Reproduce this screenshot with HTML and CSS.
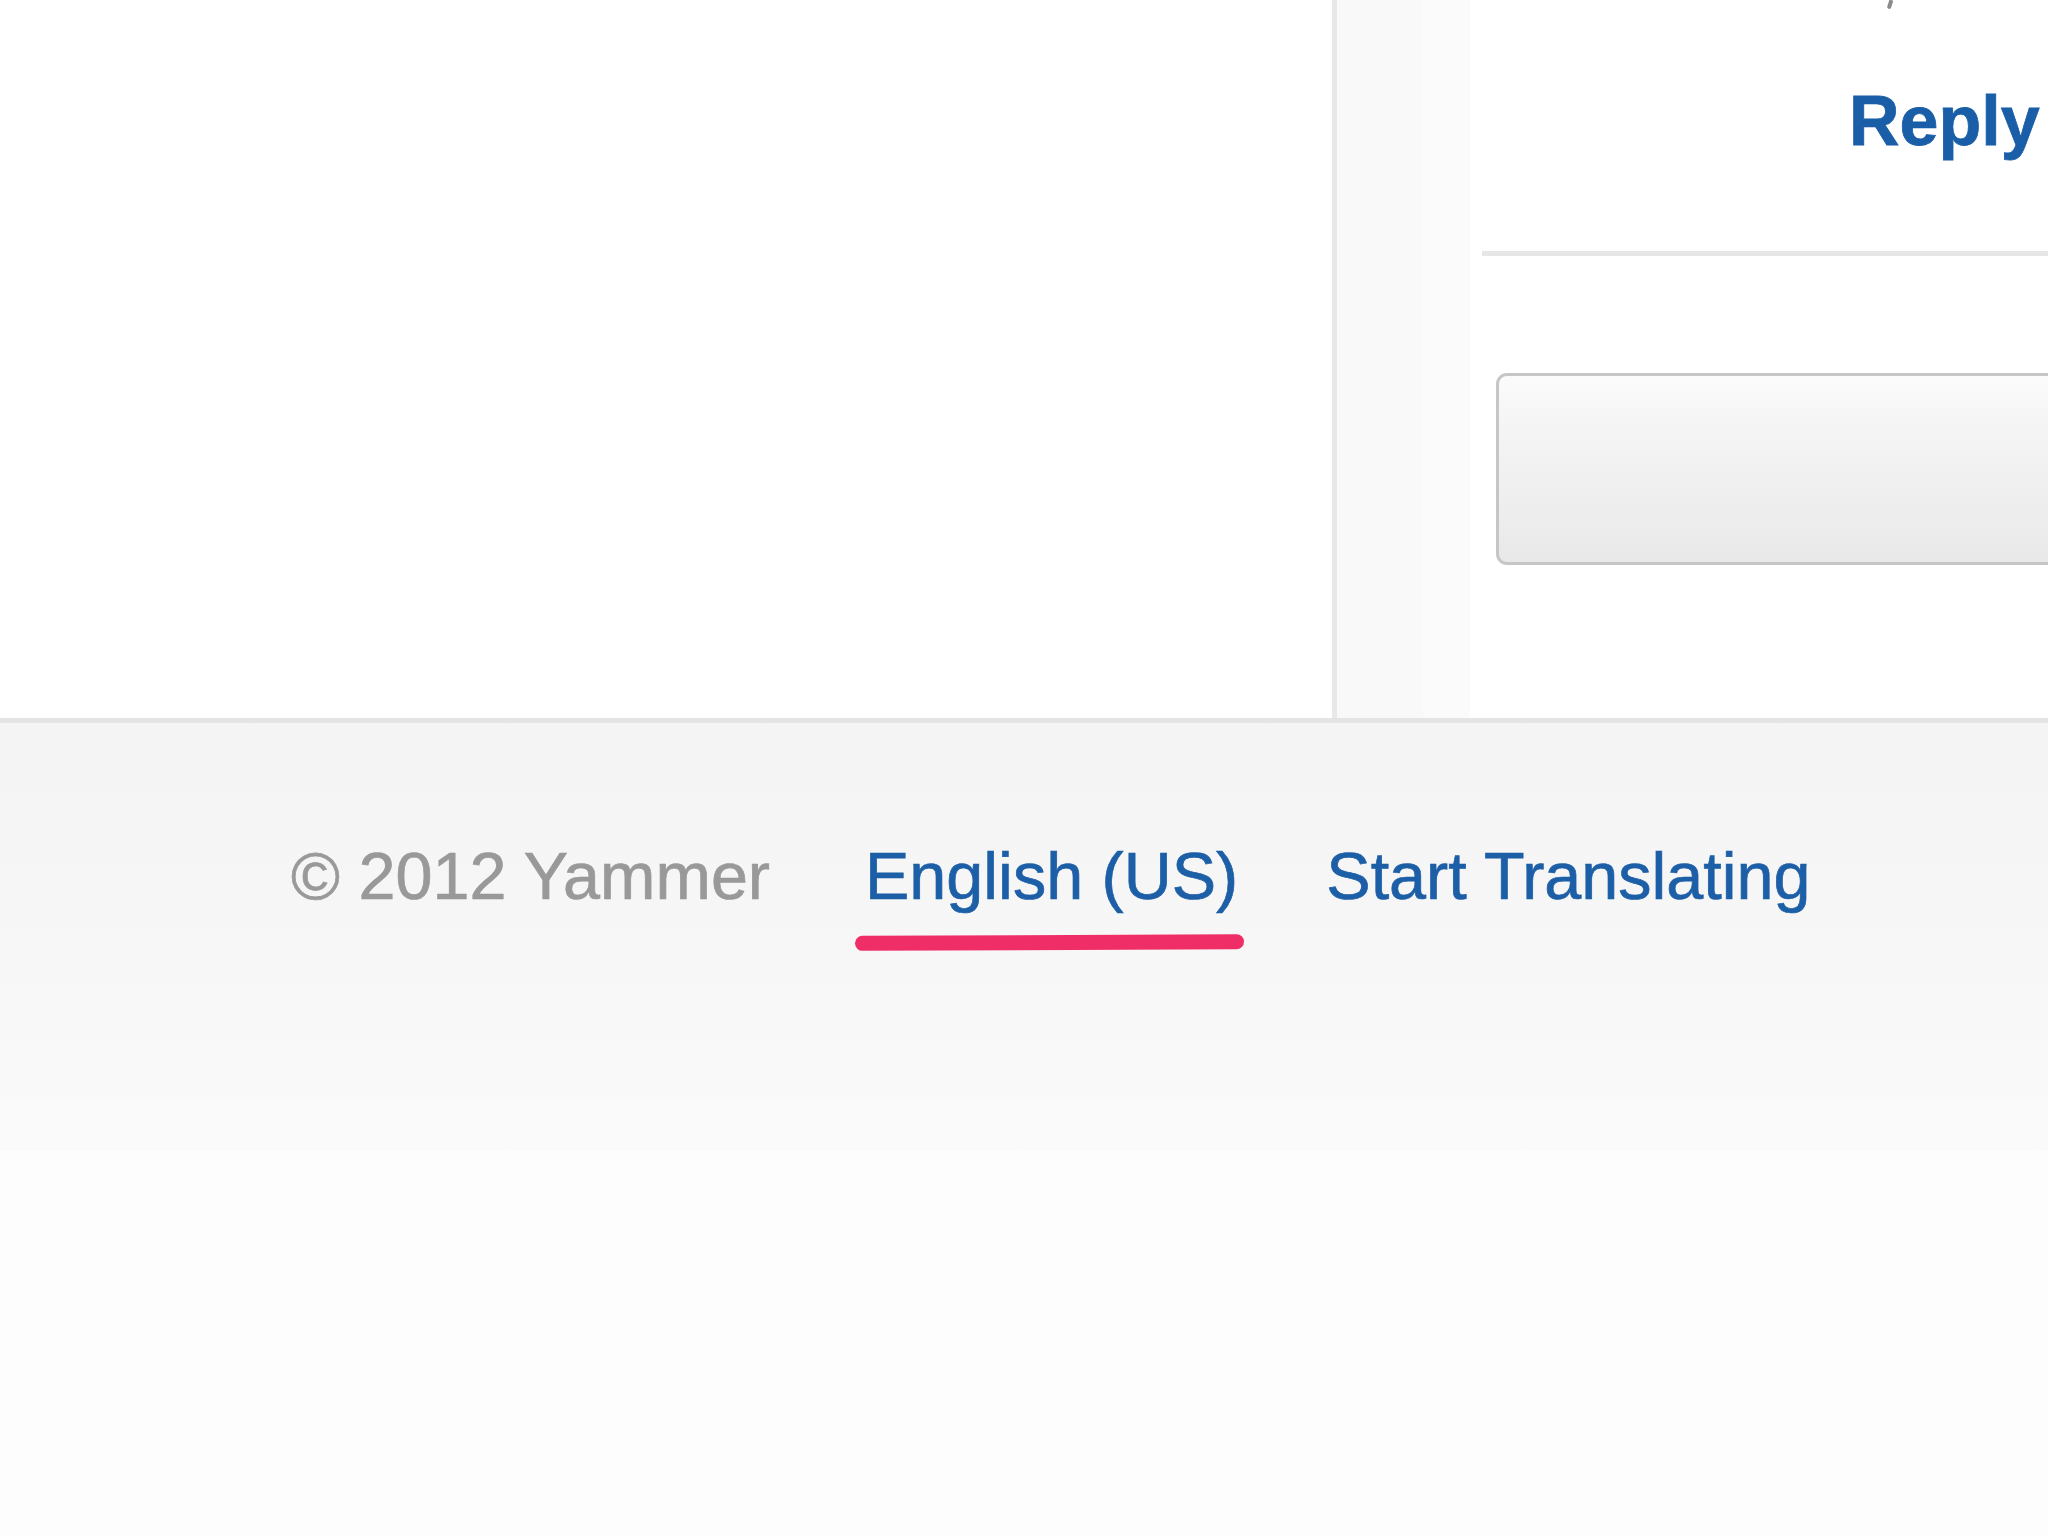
FILE: index.html
```html
<!DOCTYPE html>
<html lang="en">
<head>
<meta charset="utf-8">
<title>Yammer</title>
<link rel="stylesheet" href="styles.css">
</head>
<body>
  <div class="main">
    <div class="left-col"></div>
    <div class="divider"></div>
    <div class="band band-a"></div>
    <div class="band band-b"></div>
    <div class="thread">
      <div class="meta"><span class="tick"></span></div>
      <div class="reply-row"><a class="reply-link">Reply</a></div>
      <div class="separator"></div>
      <div class="reply-box"></div>
    </div>
  </div>
  <footer class="footer">
    <div class="footer-links">
      <span class="copyright">© 2012 Yammer</span>
      <a class="flink lang">English (US)<span class="mark"></span></a>
      <a class="flink translate">Start Translating</a>
    </div>
  </footer>
  <div class="below"></div>
</body>
</html>
```

FILE: styles.css
```css
html, body {
  margin: 0;
  padding: 0;
}
body {
  width: 2048px;
  height: 1536px;
  overflow: hidden;
  background: #fdfdfd;
  font-family: "Liberation Sans", Arial, Helvetica, sans-serif;
}
.main {
  display: flex;
  height: 718px;
  background: #ffffff;
}
.left-col {
  width: 1332px;
  background: #ffffff;
}
.divider {
  width: 5px;
  background: #e8e8e8;
}
.band-a {
  width: 86px;
  background: #f9f9f9;
}
.band-b {
  width: 47px;
  background: #fbfbfb;
}
.thread {
  flex: 1;
  min-width: 0;
  background: #ffffff;
  display: flex;
  flex-direction: column;
  overflow: hidden;
}
.meta {
  height: 10px;
  padding-left: 418px;
}
.tick {
  display: block;
  width: 4px;
  height: 9px;
  border-radius: 0 0 3px 3px;
  background: #8a8a8a;
  transform: rotate(18deg);
}
.reply-row {
  margin-top: 71px;
  padding-left: 379px;
  height: 80px;
}
.reply-link {
  font-weight: bold;
  font-size: 70px;
  line-height: 80px;
  color: #1a5ea8;
  white-space: nowrap;
  -webkit-text-stroke: 0.8px #1a5ea8;
}
.separator {
  margin-top: 90px;
  margin-left: 12px;
  height: 5px;
  background: #e6e6e6;
}
.reply-box {
  margin-top: 117px;
  margin-left: 26px;
  margin-right: -20px;
  height: 186px;
  border: 3px solid #c6c6c6;
  border-radius: 11px;
  background: linear-gradient(#fbfbfb, #f4f4f4 30%, #eeeeee 70%, #e8e8e8);
}
.footer {
  border-top: 5px solid #e4e4e4;
  height: 427px;
  background: linear-gradient(#f4f4f4, #f6f6f6 40%, #fafafa);
}
.footer-links {
  display: flex;
  align-items: baseline;
  padding-top: 115px;
  padding-left: 291px;
  font-size: 66.5px;
  line-height: 76px;
  white-space: nowrap;
}
.copyright {
  color: #999999;
  -webkit-text-stroke: 0.7px #999999;
}
.flink {
  color: #1d5fa7;
  text-decoration: none;
  -webkit-text-stroke: 0.7px #1d5fa7;
}
.lang {
  position: relative;
  margin-left: 95px;
}
.translate {
  margin-left: 88px;
}
.mark {
  position: absolute;
  left: -10px;
  right: -6px;
  top: 97px;
  height: 15px;
  border-radius: 8px;
  background: #ef2d67;
  transform: rotate(-0.25deg);
}
.below {
  height: 386px;
  background: #fdfdfd;
}
```
